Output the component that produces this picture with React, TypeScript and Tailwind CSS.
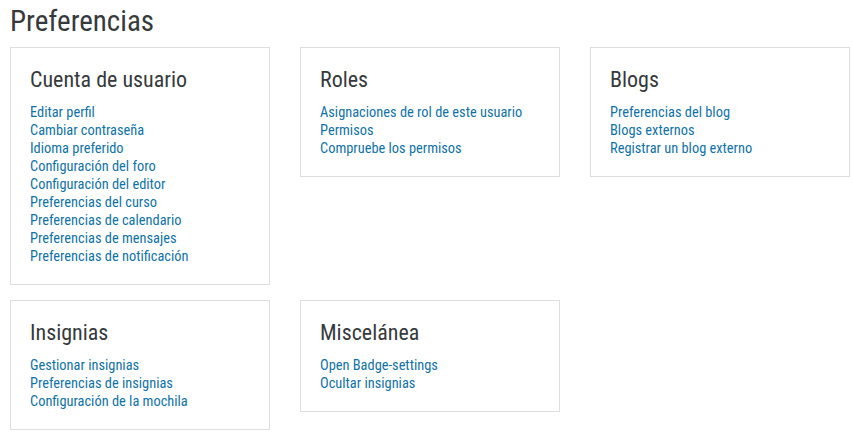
import React from "react";

const cards: { title: string; links: string[] }[][] = [
  [
    {
      title: "Cuenta de usuario",
      links: [
        "Editar perfil",
        "Cambiar contraseña",
        "Idioma preferido",
        "Configuración del foro",
        "Configuración del editor",
        "Preferencias del curso",
        "Preferencias de calendario",
        "Preferencias de mensajes",
        "Preferencias de notificación",
      ],
    },
    {
      title: "Roles",
      links: ["Asignaciones de rol de este usuario", "Permisos", "Compruebe los permisos"],
    },
    {
      title: "Blogs",
      links: ["Preferencias del blog", "Blogs externos", "Registrar un blog externo"],
    },
  ],
  [
    {
      title: "Insignias",
      links: ["Gestionar insignias", "Preferencias de insignias", "Configuración de la mochila"],
    },
    {
      title: "Miscelánea",
      links: ["Open Badge-settings", "Ocultar insignias"],
    },
  ],
];

export default function App() {
  return (
    <div
      className="bg-white w-[853px] h-[437px] overflow-hidden pl-[10px] text-[#373a3c]"
      style={{ fontFamily: "'Roboto Condensed', Roboto, sans-serif", fontStretch: "condensed" }}
    >
      <h1 className="text-[29px] leading-[34px] pt-[4px] mb-[9px] font-normal">Preferencias</h1>
      <div className="flex flex-col gap-[15px]">
        {cards.map((row, i) => (
          <div key={i} className="flex items-start gap-[30px]">
            {row.map((c) => (
              <div
                key={c.title}
                className="w-[260px] shrink-0 border border-[#dedede] px-[19px] pt-[19px] pb-[18px]"
              >
                <h3 className="text-[22px] leading-[26px] mb-[11px] font-normal">{c.title}</h3>
                <ul className="text-[14.4px] leading-[18px] text-[#0f72a6]">
                  {c.links.map((l) => (
                    <li key={l}>
                      <a href="#">{l}</a>
                    </li>
                  ))}
                </ul>
              </div>
            ))}
          </div>
        ))}
      </div>
    </div>
  );
}
